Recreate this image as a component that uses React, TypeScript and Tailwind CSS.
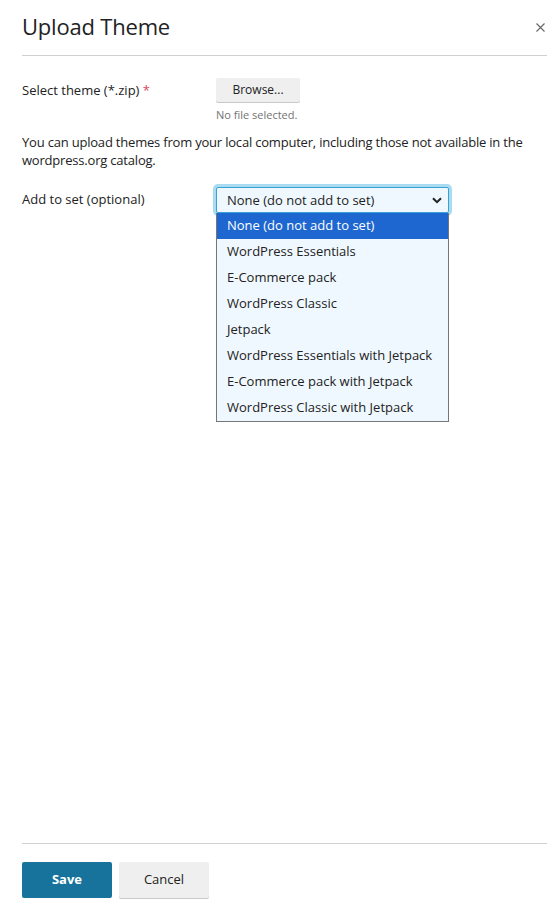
import React from "react";

const options = [
  "None (do not add to set)",
  "WordPress Essentials",
  "E-Commerce pack",
  "WordPress Classic",
  "Jetpack",
  "WordPress Essentials with Jetpack",
  "E-Commerce pack with Jetpack",
  "WordPress Classic with Jetpack",
];

export default function App() {
  return (
    <div
      className="flex min-h-[912px] w-[547px] flex-col bg-white pl-[22px] text-[13px] text-[#222222]"
      style={{ fontFamily: '"Open Sans", "Noto Sans", sans-serif' }}
    >
      {/* Header */}
      <div className="flex h-[56px] items-center justify-between border-b border-[#d1d1d1]">
        <h1 className="pb-[3px] text-[22px] leading-[32px] font-normal tracking-[-0.2px] text-[#222222]">Upload Theme</h1>
        <button className="mr-[2px] mb-[1px] flex h-[10px] w-[10px] items-center justify-center text-[#666666]">
          <svg width="9" height="9" viewBox="0 0 9 9" fill="none">
            <path d="M0.5 0.5L8.5 8.5M8.5 0.5L0.5 8.5" stroke="#666666" strokeWidth="1.1" />
          </svg>
        </button>
      </div>

      {/* Body */}
      <div className="pr-[2px]">
        <div className="mt-[22px] flex">
          <div className="w-[194px] pt-[3px] leading-[18px]">
            Select theme (*.zip) <span className="text-[#e0465e]">*</span>
          </div>
          <div className="flex flex-col">
            <button className="h-[24px] w-[84px] rounded-[2px] bg-[#efefef] text-[12px] text-[#222222] shadow-[0_1px_0_#c9c9c9]">
              Browse...
            </button>
            <div className="mt-[5px] text-[11px] leading-[15px] text-[#737373]">No file selected.</div>
          </div>
        </div>

        <p className="mt-[11px] leading-[18px] tracking-[-0.2px]">
          You can upload themes from your local computer, including those not available in the wordpress.org catalog.
        </p>

        <div className="mt-[18px] flex">
          <div className="w-[194px] pt-[3px] leading-[18px]">Add to set (optional)</div>
          <div className="relative">
            <div className="flex h-[26px] w-[233px] items-center justify-between rounded-[2px] border border-[#3aa0d6] bg-[#eff8fe] pr-[6px] pl-[10px] shadow-[0_0_0_3px_#a9dcf1]">
              <span className="leading-[18px]">None (do not add to set)</span>
              <svg width="10" height="7" viewBox="0 0 10 7" fill="none">
                <path d="M1 1.2L5 5.2L9 1.2" stroke="#222222" strokeWidth="2" />
              </svg>
            </div>
            <div className="absolute top-[26px] left-0 z-10 w-[233px] border border-t-0 border-[#767676] bg-[#f0f8ff]">
              {options.map((o, i) => (
                <div
                  key={o}
                  className={
                    i === 0
                      ? "flex h-[26px] items-center bg-[#1e67d0] pl-[10px] text-white"
                      : "flex h-[26px] items-center pl-[10px] text-[#222222]"
                  }
                >
                  {o}
                </div>
              ))}
            </div>
          </div>
        </div>
      </div>

      {/* Footer */}
      <div className="mt-auto border-t border-[#d1d1d1] pt-[18px] pb-[14px]">
        <div className="flex gap-[7px]">
          <button className="h-[36px] w-[90px] rounded-[2px] bg-[#17739b] text-[13px] font-bold text-white">
            Save
          </button>
          <button className="h-[36px] w-[90px] rounded-[2px] bg-[#efefef] text-[13px] text-[#222222] shadow-[0_1px_0_#c9c9c9]">
            Cancel
          </button>
        </div>
      </div>
    </div>
  );
}
